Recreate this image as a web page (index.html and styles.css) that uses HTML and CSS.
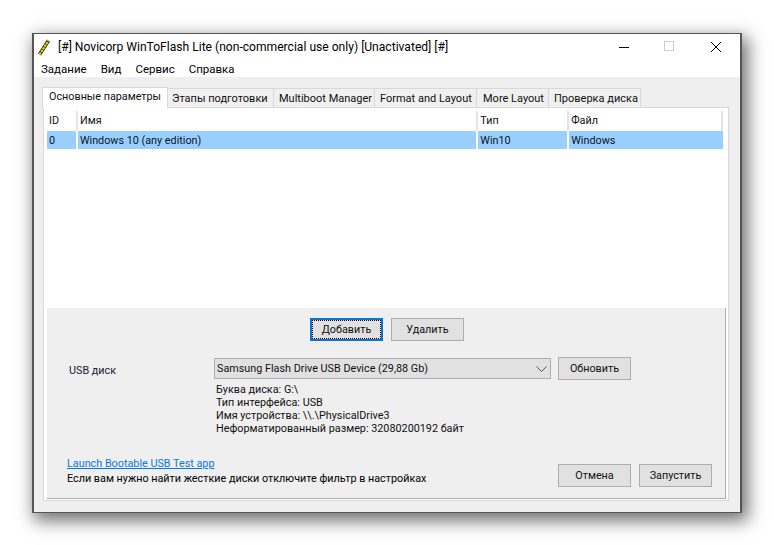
FILE: index.html
```html
<!DOCTYPE html>
<html lang="ru">
<head>
<meta charset="utf-8">
<title>Novicorp WinToFlash Lite</title>
<link rel="stylesheet" href="styles.css">
</head>
<body>
<div class="window">
  <header class="titlebar">
    <svg class="app-icon" width="16" height="18" viewBox="0 0 16 18"><path d="M2.5 16.5 L11.5 2.5" stroke="#1c1c10" stroke-width="3.6" fill="none"/><path d="M2.5 16.5 L11.5 2.5" stroke="#e8dc1c" stroke-width="2.2" fill="none" stroke-dasharray="2.4 .7"/></svg>
    <span class="title">[#] Novicorp WinToFlash Lite (non-commercial use only) [Unactivated] [#]</span>
    <div class="controls">
      <svg class="ctl ctl-min" width="12" height="12" viewBox="0 0 12 12"><path d="M1 6.5H11" stroke="#000"/></svg>
      <svg class="ctl ctl-max" width="12" height="12" viewBox="0 0 12 12"><rect x=".5" y=".5" width="9" height="9" fill="none" stroke="#ccc"/></svg>
      <svg class="ctl ctl-close" width="12" height="12" viewBox="0 0 12 12"><path d="M1 1L11 11M11 1L1 11" stroke="#000"/></svg>
    </div>
  </header>
  <nav class="menubar">
    <span>Задание</span><span>Вид</span><span>Сервис</span><span>Справка</span>
  </nav>
  <div class="content">
    <div class="tabs">
      <div class="tab tab-active w1">Основные параметры</div>
      <div class="tab w2">Этапы подготовки</div>
      <div class="tab w3">Multiboot Manager</div>
      <div class="tab w4">Format and Layout</div>
      <div class="tab w5">More Layout</div>
      <div class="tab w6">Проверка диска</div>
    </div>
    <div class="panel">
      <div class="list">
        <div class="row head"><div class="c c1">ID</div><div class="c c2">Имя</div><div class="c c3">Тип</div><div class="c c4">Файл</div></div>
        <div class="row sel"><div class="c c1">0</div><div class="c c2">Windows 10 (any edition)</div><div class="c c3">Win10</div><div class="c c4">Windows</div></div>
      </div>
      <div class="lower">
        <div class="add-row">
          <button class="btn btn-focus"><span>Добавить</span></button>
          <button class="btn">Удалить</button>
        </div>
        <div class="usb-row">
          <div class="usb-label">USB диск</div>
          <div class="select"><span>Samsung Flash Drive USB Device (29,88 Gb)</span>
            <svg width="11" height="6" viewBox="0 0 11 6"><path d="M.5 .5L5.5 5.5L10.5 .5" fill="none" stroke="#555"/></svg>
          </div>
          <button class="btn">Обновить</button>
        </div>
        <div class="info">
          <div>Буква диска: G:\</div>
          <div>Тип интерфейса: USB</div>
          <div>Имя устройства: \\.\PhysicalDrive3</div>
          <div>Неформатированный размер: 32080200192 байт</div>
        </div>
        <div class="bottom">
          <div class="notes">
            <a class="link" href="#">Launch Bootable USB Test app</a>
            <div>Если вам нужно найти жесткие диски отключите фильтр в настройках</div>
          </div>
          <div class="actions">
            <button class="btn">Отмена</button>
            <button class="btn">Запустить</button>
          </div>
        </div>
      </div>
    </div>
  </div>
</div>
</body>
</html>
```

FILE: styles.css
```css
* { box-sizing: border-box; }
html, body { margin: 0; height: 100%; background: #fff; }
body { padding: 33px 0 0 32px; font: 10.8px/15px Roboto, "Noto Sans", sans-serif; color: #111; overflow: hidden; }
.window { width: 710px; height: 480px; border: 1px solid #555; border-left-width: 2px; border-right-width: 2px; background: #efefef; box-shadow: 4px 6px 16px 2px rgba(0,0,0,.55); display: flex; flex-direction: column; }
.titlebar { height: 26px; background: #fff; display: flex; align-items: center; padding-left: 3px; font-size: 12.1px; }
.app-icon { margin-right: 5px; flex: none; }
.title { flex: 1; white-space: nowrap; color: #000; }
.controls { display: flex; align-items: center; flex: none; }
.ctl { display: block; }
.ctl-min { margin-right: 34px; }
.ctl-max { margin-right: 34px; }
.ctl-close { margin-right: 18px; }
.menubar { height: 17px; background: #fff; display: flex; padding-left: 7px; gap: 14px; font-size: 11.5px; color: #000; line-height: 18px; }
.content { flex: 1; padding: 9px 11px 11px 9px; display: flex; flex-direction: column; min-height: 0; }
.tabs { display: flex; align-items: flex-end; height: 21px; position: relative; z-index: 1; margin-left: -1px; }
.tab { height: 19px; border: 1px solid #d9d9d9; border-bottom: 0; border-left-width: 0; background: #f0f0f0; padding-left: 5px; white-space: nowrap; line-height: 20px; margin-bottom: 0; font-size: 11px; }
.tab-active { height: 21px; background: #fff; border-left-width: 1px; line-height: 18px; padding-left: 6px; margin-bottom: -1px; font-size: 10.8px; }
.w1 { width: 126px; } .w2 { width: 106px; padding-left: 4px; } .w3 { width: 101px; } .w4 { width: 102px; } .w5 { width: 72px; padding-left: 6px; } .w6 { width: 92px; }
.panel { flex: 1; background: #fff; border: 1px solid #d9d9d9; padding: 3px 2px 1px 3px; display: flex; flex-direction: column; min-height: 0; }
.list { height: 197px; background: #fff; padding-right: 3px; flex: none; }
.row { display: flex; }
.head { height: 20px; }
.sel { height: 18px; background: #99cfff; color: #0a1526; }
.c { padding-left: 2px; line-height: 19px; white-space: nowrap; border-right: 2px solid #fff; }
.head .c { border-right-color: #e4e4e4; line-height: 20px; }
.c1 { width: 31px; } .c2 { width: 401px; } .c3 { width: 91px; } .c4 { width: 154px; border-right: 0; }
.head .c4 { border-right: 2px solid #e4e4e4; }
.lower { flex: 1; background: #efefef; border-bottom: 1px solid #adadad; border-right: 1px solid #adadad; display: flex; flex-direction: column; padding: 10px 13px 11px 20px; min-height: 0; }
.btn { width: 73px; height: 23px; background: #e1e1e1; border: 1px solid #adadad; font: inherit; color: #111; padding: 0; display: flex; align-items: center; justify-content: center; }
.btn-focus { border: 2px solid #0078d7; }
.btn-focus span { display: flex; align-items: center; justify-content: center; width: 100%; height: 100%; border: 1px dotted #000; }
.add-row { display: flex; gap: 8px; padding-left: 243px; }
.usb-row { display: flex; align-items: center; margin-top: 16px; height: 23px; }
.usb-label { width: 147px; color: #1a1a3a; padding-left: 2px; padding-top: 3px; }
.select { width: 337px; height: 21px; border: 1px solid #adadad; background: #e1e1e1; display: flex; align-items: center; justify-content: space-between; padding: 0 1px 0 2px; margin-right: 7px; }
.select svg { flex: none; margin-right: 2px; }
.info { margin: 3px 0 0 149px; line-height: 13px; height: 52px; color: #111; }
.bottom { flex: 1; display: flex; justify-content: space-between; align-items: flex-end; }
.notes { line-height: 15px; color: #000; margin-bottom: 1px; }
.link { color: #0a78e0; text-decoration: underline; display: block; }
.actions { display: flex; gap: 8px; }
```
